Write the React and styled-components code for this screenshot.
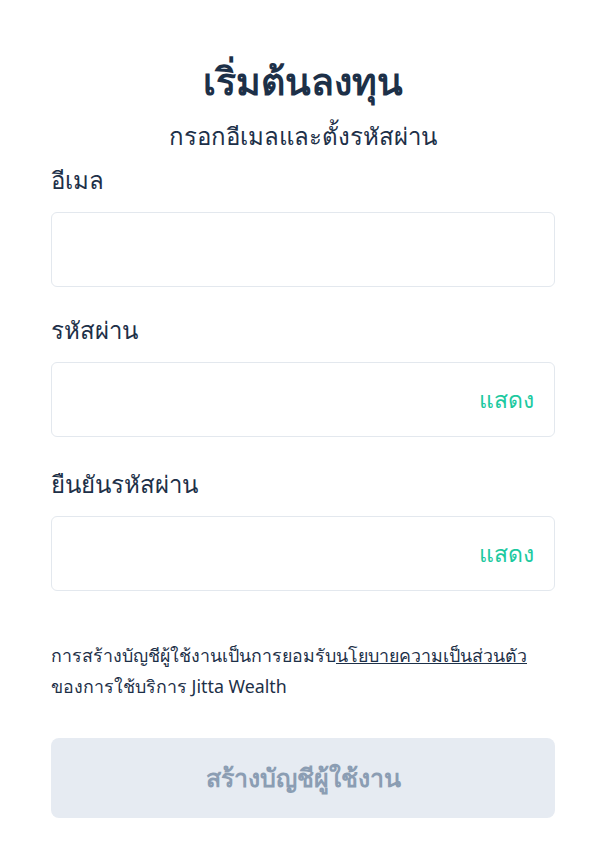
import React from 'react'
import styled, { createGlobalStyle } from 'styled-components'

const GlobalStyle = createGlobalStyle`
  html, body {
    margin: 0;
    padding: 0;
    background: #ffffff;
  }
  body {
    font-family: "Noto Sans", "Open Sans", "DejaVu Sans", sans-serif;
    color: #1d3048;
  }
`

export default function App() {
  return (
    <>
      <GlobalStyle />
      <Page>
        <Title>เริ่มต้นลงทุน</Title>
        <Subtitle>กรอกอีเมลและตั้งรหัสผ่าน</Subtitle>

        <Field $gap={8}>
          <Label>อีเมล</Label>
          <InputBox />
        </Field>

        <Field $gap={25}>
          <Label>รหัสผ่าน</Label>
          <InputBox>
            <ShowButton>แสดง</ShowButton>
          </InputBox>
        </Field>

        <Field $gap={29}>
          <Label>ยืนยันรหัสผ่าน</Label>
          <InputBox>
            <ShowButton>แสดง</ShowButton>
          </InputBox>
        </Field>

        <Terms>
          การสร้างบัญชีผู้ใช้งานเป็นการยอมรับ<a>นโยบายความเป็นส่วนตัว</a>
          <br />
          ของการใช้บริการ Jitta Wealth
        </Terms>

        <SubmitButton disabled>สร้างบัญชีผู้ใช้งาน</SubmitButton>
      </Page>
    </>
  )
}

const Page = styled.div`
  width: 504px;
  margin: 0 auto;
  padding: 54px 0 30px;
  display: flex;
  flex-direction: column;
`

const Title = styled.h1`
  margin: 0;
  text-align: center;
  font-size: 37.5px;
  font-weight: 700;
  line-height: 54px;
  color: #1d3048;
`

const Subtitle = styled.p`
  margin: 10px 0 0;
  text-align: center;
  font-size: 24px;
  line-height: 36px;
  color: #1d3048;
`

const Field = styled.div`
  display: flex;
  flex-direction: column;
  margin-top: ${p => p.$gap}px;
`

const Label = styled.label`
  font-size: 24px;
  line-height: 36px;
  color: #1d3048;
  margin-bottom: 14px;
`

const InputBox = styled.div`
  height: 75px;
  box-sizing: border-box;
  border: 1.5px solid #e3e8ee;
  border-radius: 6px;
  display: flex;
  align-items: center;
  justify-content: flex-end;
  padding: 0 20px;
`

const ShowButton = styled.span`
  font-size: 23px;
  color: #1cc9a0;
`

const Terms = styled.p`
  margin: 49px 0 0;
  font-size: 17.8px;
  line-height: 31px;
  color: #1d3048;
  a {
    text-decoration: underline;
    color: inherit;
  }
`

const SubmitButton = styled.button`
  margin-top: 36px;
  height: 80px;
  border: none;
  border-radius: 8px;
  background: #e6ebf2;
  color: #8b9db3;
  font-family: inherit;
  font-size: 25px;
  font-weight: 700;
`
